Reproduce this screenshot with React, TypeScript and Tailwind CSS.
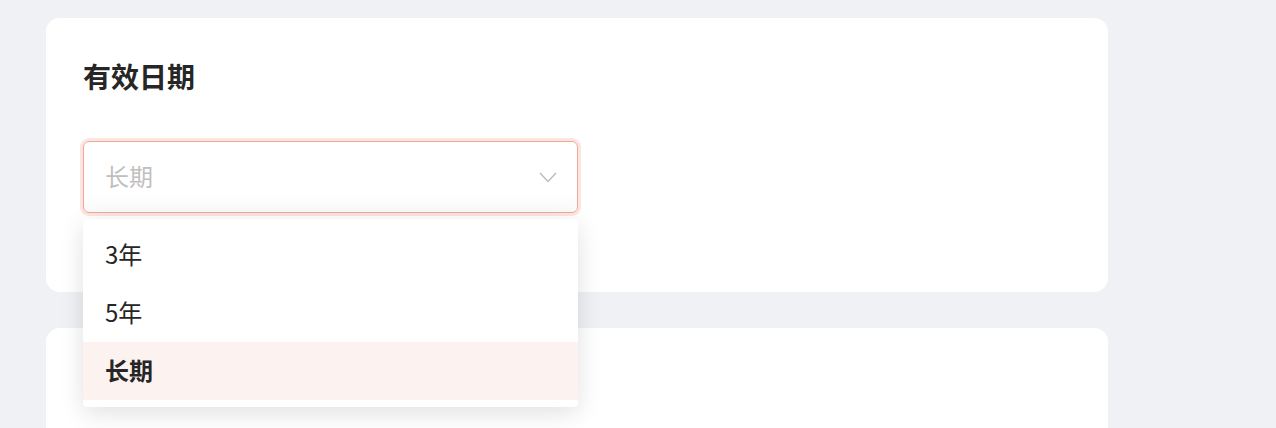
import React from "react";

export default function App() {
  const font = { fontFamily: '"Noto Sans CJK SC", "Noto Sans", sans-serif' };
  return (
    <div className="w-[1276px] h-[428px] overflow-hidden bg-[#f0f1f4] pt-[18px] pl-[46px]" style={font}>
      <div className="w-[1062px] flex flex-col gap-[36px]">
        <div className="relative h-[274px] bg-white rounded-[14px] pl-[37px] pt-[41px]">
          <div className="text-[28px] leading-[34px] font-bold text-[#262626]">有效日期</div>
          <div className="mt-[48px] w-[495px] h-[72px] rounded-[6px] border border-[#f0a898] ring-[3px] ring-[#fde6e2] bg-gradient-to-b from-white from-70% to-[#fafafa] flex items-center justify-between pl-[21px] pr-[20px]">
            <span className="text-[24px] text-[#bfbfbf] leading-none pb-[3px]">长期</span>
            <svg width="18" height="11" viewBox="0 0 18 11" fill="none">
              <path d="M1 1l8 8.5L17 1" stroke="#bdbdbd" strokeWidth="1.5" />
            </svg>
          </div>
          <div className="absolute left-[37px] top-[201px] w-[495px] py-[7px] bg-white rounded-[4px] shadow-[0_6px_24px_rgba(0,0,0,0.12)] z-10">
            <div className="h-[58px] flex items-center pl-[22px] pb-[3px] text-[24px] text-[#262626]">3年</div>
            <div className="h-[58px] flex items-center pl-[22px] pb-[3px] text-[24px] text-[#262626]">5年</div>
            <div className="h-[58px] flex items-center pl-[22px] pb-[3px] text-[24px] font-bold text-[#262626] bg-[#fcf2f0]">长期</div>
          </div>
        </div>
        <div className="h-[200px] bg-white rounded-[14px]"></div>
      </div>
    </div>
  );
}
